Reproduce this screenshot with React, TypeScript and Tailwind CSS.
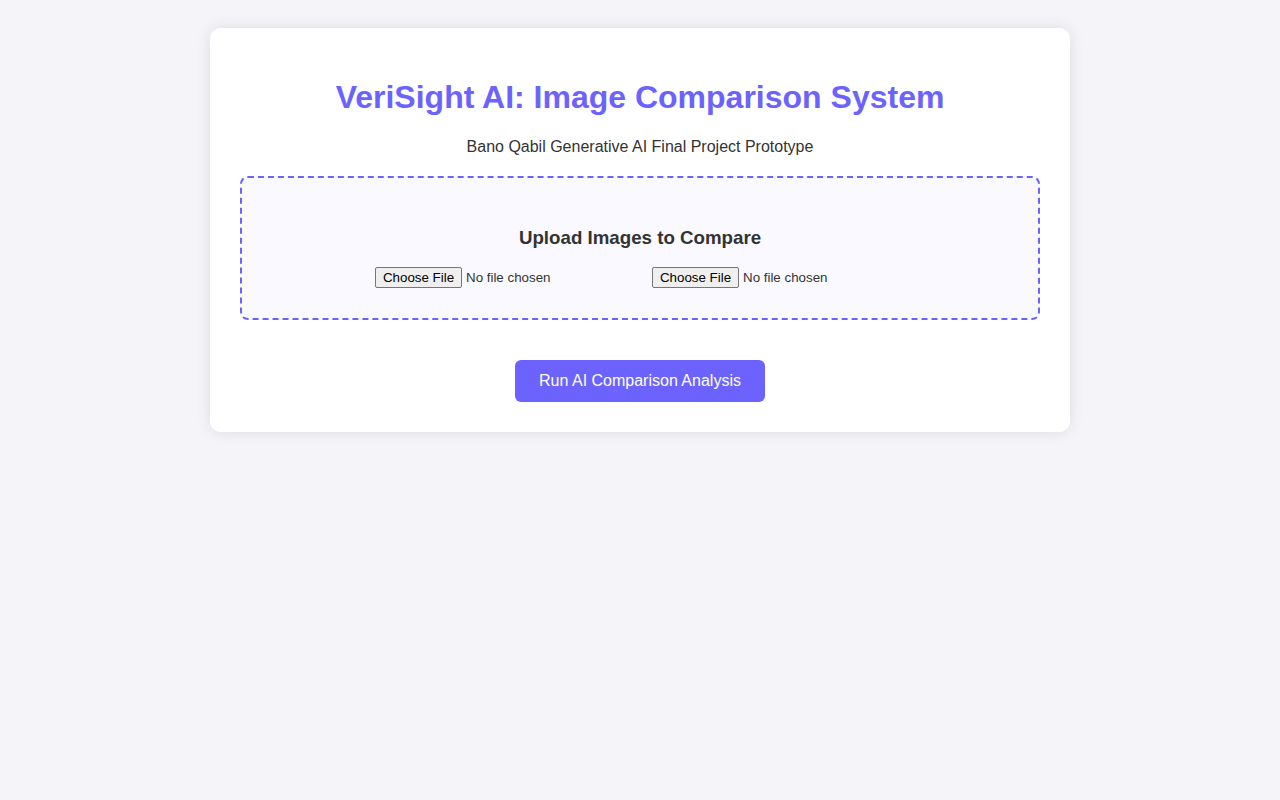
export default function App() {
  return (
    <div className="min-h-screen bg-[#f4f4f9] font-['Liberation_Sans',Arial,sans-serif] text-[#333] pt-[28px]">
      <div className="mx-auto w-[860px] rounded-[10px] bg-white p-[30px] text-center shadow-[0_0_15px_rgba(0,0,0,0.1)]">
        <h1 className="my-[21.44px] text-[32px] leading-[36.8px] font-bold text-[#6c63ff]">
          VeriSight AI: Image Comparison System
        </h1>
        <p className="mt-[21.44px] text-base leading-[18.4px]">Bano Qabil Generative AI Final Project Prototype</p>
        <div className="mt-[20px] mb-[20px] rounded-[8px] border-2 border-dashed border-[#6c63ff] bg-[#f9f9ff] p-[30px]">
          <h3 className="mb-[18.72px] mt-[18.72px] text-[18.72px] leading-[21.5px] font-bold">Upload Images to Compare</h3>
          <div className="flex justify-center gap-[24px]">
            <FileInput />
            <FileInput />
          </div>
        </div>
        <button className="mt-[20px] rounded-[6px] bg-[#6c63ff] px-[24px] py-[12px] text-base leading-[18px] text-white">
          Run AI Comparison Analysis
        </button>
      </div>
    </div>
  )
}

function FileInput() {
  return (
    <div className="flex w-[253px] items-center text-left text-[13.33px] leading-[15px] text-[#333]">
      <span className="h-[21px] w-[87px] rounded-[2px] border border-[#767676] bg-[#efefef] text-center leading-[19px] text-black">
        Choose File
      </span>
      <span className="ml-[4px]">No file chosen</span>
    </div>
  )
}
